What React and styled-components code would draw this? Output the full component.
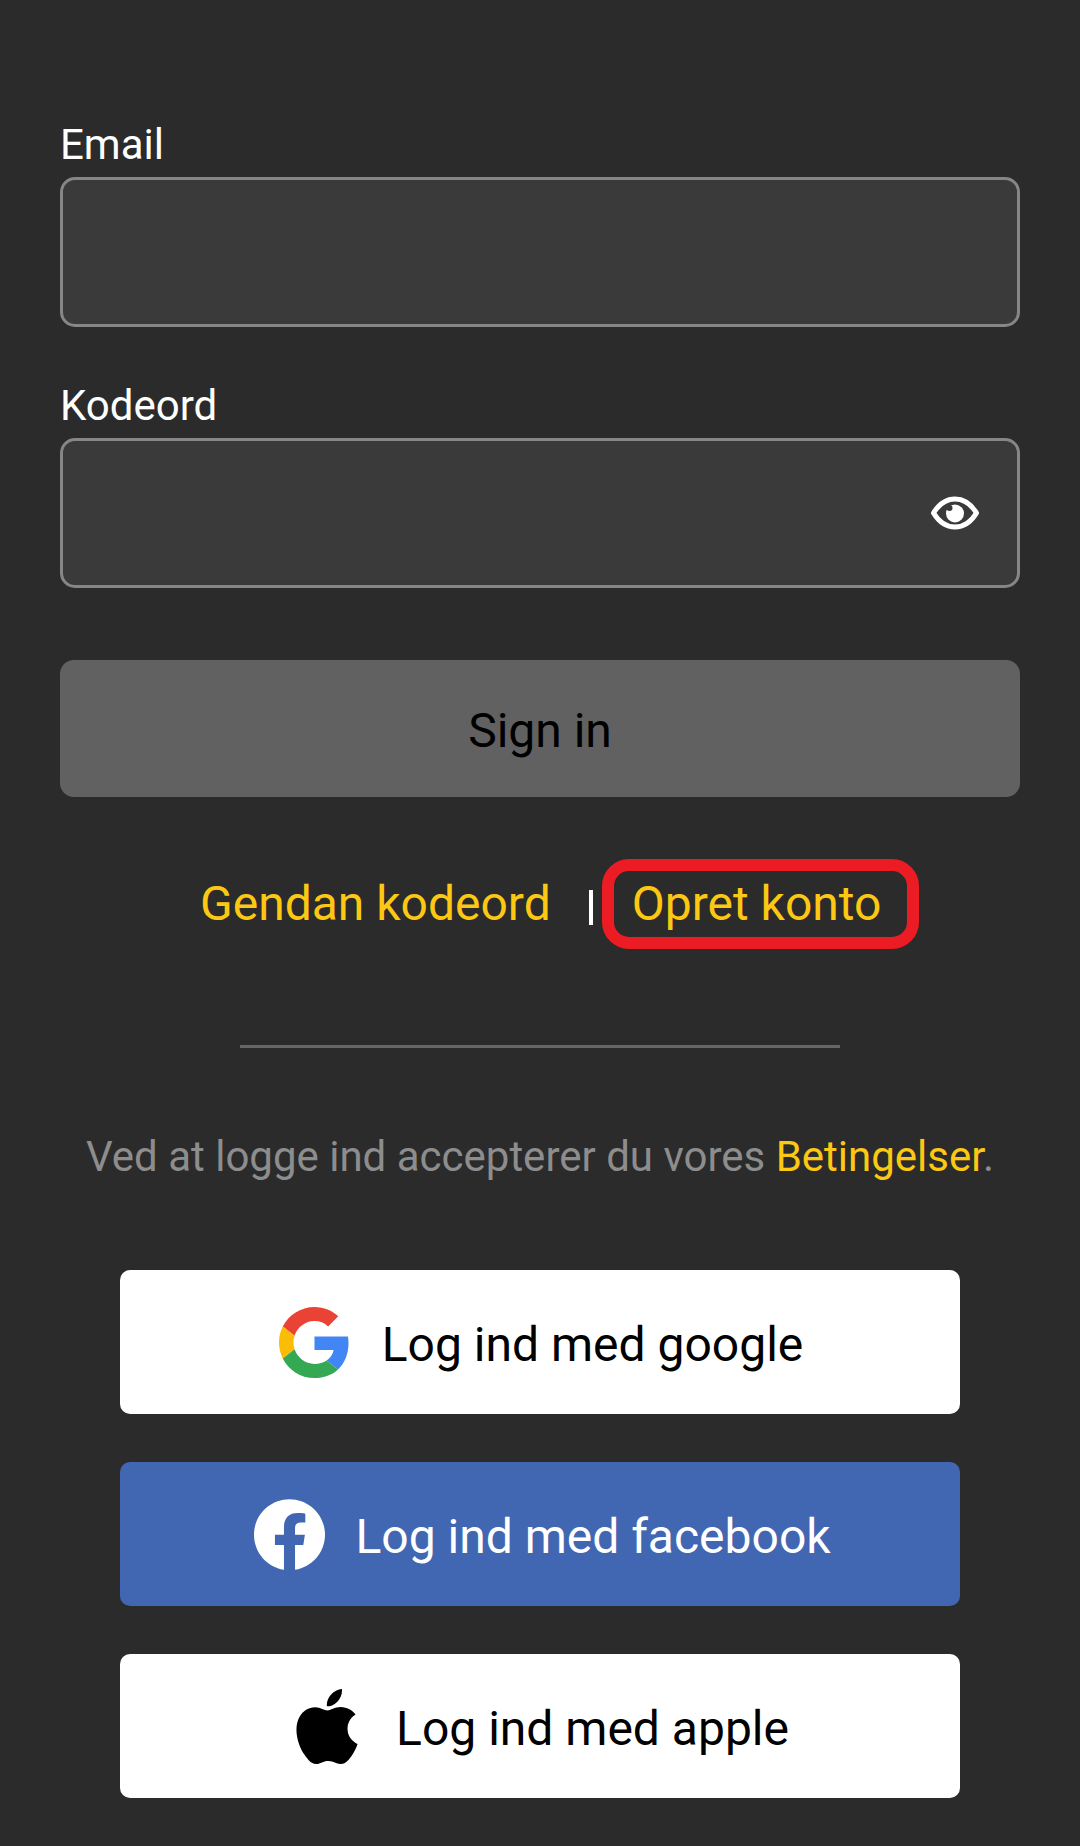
import React from "react";
import styled, { createGlobalStyle } from "styled-components";

const Global = createGlobalStyle`
  html, body { margin: 0; padding: 0; background: #2b2b2b; }
  * { box-sizing: border-box; }
`;

const Page = styled.main`
  width: 1080px;
  height: 1846px;
  padding: 120px 60px 0;
  background: #2b2b2b;
  font-family: Roboto, "Liberation Sans", sans-serif;
  display: flex;
  flex-direction: column;
  overflow: hidden;
`;

const Field = styled.div`
  display: flex;
  flex-direction: column;
  margin-bottom: 54px;
`;

const Label = styled.label`
  height: 57px;
  font-size: 42px;
  line-height: 49px;
  color: #fff;
`;

const InputBox = styled.div`
  width: 960px;
  height: 150px;
  border: 3px solid #868686;
  border-radius: 15px;
  background: #3a3a3a;
  display: flex;
  align-items: center;
  justify-content: flex-end;
  padding: 0 38px 0 0;
`;

const SignIn = styled.button`
  width: 960px;
  height: 137px;
  margin-top: 18px;
  border: 0;
  border-radius: 14px;
  background: #616161;
  color: #000;
  font: 400 48px/56px Roboto, sans-serif;
  padding: 4px 0 0;
`;

const Links = styled.div`
  height: 92px;
  margin-top: 60px;
  display: flex;
  align-items: center;
  font-size: 48px;
  padding-left: 140px;
  color: #fcc813;
`;

const Sep = styled.span`
  width: 4px;
  height: 35px;
  margin: 8px 39px 0 38px;
  background: #fff;
`;

const Highlighted = styled.span`
  position: relative;
  display: inline-block;
  &::after {
    content: "";
    position: absolute;
    left: -30px;
    right: -38px;
    top: -16px;
    bottom: -17px;
    border: 12px solid #ec1c24;
    border-radius: 27px;
  }
`;

const Divider = styled.hr`
  width: 600px;
  height: 3px;
  margin: 96px auto 0;
  border: 0;
  background: #666;
`;

const Terms = styled.p`
  margin: 84px 0 0;
  text-align: center;
  font-size: 42px;
  line-height: 49px;
  color: #8d8d8d;
`;

const TermsLink = styled.span`
  color: #fcc813;
`;

const SocialList = styled.div`
  margin-top: 89px;
  display: flex;
  flex-direction: column;
  align-items: center;
  gap: 48px;
`;

const SocialButton = styled.button`
  width: 840px;
  height: 144px;
  border: 0;
  border-radius: 10px;
  padding: 0 0 0 ${(p) => p.$shift}px;
  display: flex;
  align-items: center;
  justify-content: center;
  gap: ${(p) => p.$gap}px;
  background: ${(p) => p.$bg};
  color: ${(p) => p.$fg};
  font: 400 48px/56px Roboto, sans-serif;
`;

const SocialLabel = styled.span`
  margin-top: 5px;
`;

const Eye = () => (
  <svg width="48" height="34" viewBox="0 0 48 34" fill="none">
    <path d="M2.500 17C8 8 15.500 3 24 3s16 5 21.500 14C40 26 32.500 31 24 31S8 26 2.500 17Z" stroke="#fff" strokeWidth="5" strokeLinejoin="round" />
    <circle cx="24" cy="17.500" r="9" fill="#fff" />
    <circle cx="18.500" cy="12" r="3" fill="#3a3a3a" />
  </svg>
);

const GoogleLogo = () => (
  <svg width="71" height="71" viewBox="0 0 48 48">
    <path fill="#EA4335" d="M24 9.500c3.540 0 6.710 1.220 9.210 3.600l6.850-6.850C35.900 2.380 30.470 0 24 0 14.620 0 6.510 5.380 2.560 13.220l7.980 6.190C12.430 13.720 17.740 9.500 24 9.500z" />
    <path fill="#4285F4" d="M46.980 24.550c0-1.570-.15-3.090-.38-4.550H24v9.020h12.940c-.58 2.960-2.260 5.480-4.780 7.180l7.730 6c4.510-4.180 7.090-10.360 7.090-17.650z" />
    <path fill="#FBBC05" d="M10.530 28.590c-.48-1.450-.76-2.990-.76-4.590s.27-3.140.76-4.590l-7.980-6.190C.92 16.460 0 20.120 0 24c0 3.880.92 7.540 2.560 10.780l7.970-6.190z" />
    <path fill="#34A853" d="M24 48c6.480 0 11.930-2.130 15.890-5.810l-7.730-6c-2.150 1.450-4.920 2.300-8.160 2.300-6.260 0-11.570-4.220-13.470-9.910l-7.980 6.190C6.510 42.620 14.620 48 24 48z" />
  </svg>
);

const FacebookLogo = () => (
  <svg width="71" height="71" viewBox="0 0 24 24">
    <path fill="#fff" d="M24 12.073c0-6.627-5.373-12-12-12s-12 5.373-12 12c0 5.990 4.388 10.954 10.125 11.854v-8.385H7.078v-3.470h3.047V9.430c0-3.007 1.792-4.669 4.533-4.669 1.312 0 2.686.235 2.686.235v2.953H15.830c-1.491 0-1.956.925-1.956 1.874v2.250h3.328l-.532 3.470h-2.796v8.385C19.612 23.027 24 18.062 24 12.073z" />
  </svg>
);

const AppleLogo = () => (
  <svg width="62" height="75" viewBox="2.200 0 19.600 24">
    <path fill="#000" d="M12.152 6.896c-.948 0-2.415-1.078-3.960-1.040-2.040.027-3.910 1.183-4.961 3.014-2.117 3.675-.546 9.103 1.519 12.090 1.013 1.454 2.208 3.090 3.792 3.039 1.520-.065 2.090-.987 3.935-.987 1.831 0 2.350.987 3.960.948 1.637-.026 2.676-1.480 3.676-2.948 1.156-1.688 1.636-3.325 1.662-3.415-.039-.013-3.182-1.221-3.220-4.857-.026-3.040 2.480-4.494 2.597-4.559-1.429-2.090-3.623-2.324-4.390-2.376-2-.156-3.675 1.090-4.610 1.090zM15.530 3.830c.843-1.012 1.400-2.427 1.245-3.830-1.207.052-2.662.805-3.532 1.818-.780.896-1.454 2.338-1.273 3.714 1.338.104 2.715-.688 3.559-1.701" />
  </svg>
);

export default function App() {
  return (
    <>
      <Global />
      <Page>
        <Field>
          <Label>Email</Label>
          <InputBox />
        </Field>
        <Field>
          <Label>Kodeord</Label>
          <InputBox>
            <Eye />
          </InputBox>
        </Field>
        <SignIn>Sign in</SignIn>
        <Links>
          <span>Gendan kodeord</span>
          <Sep />
          <Highlighted>Opret konto</Highlighted>
        </Links>
        <Divider />
        <Terms>
          Ved at logge ind accepterer du vores <TermsLink>Betingelser</TermsLink>.
        </Terms>
        <SocialList>
          <SocialButton $bg="#fff" $fg="#000" $gap={32} $shift={2}>
            <GoogleLogo />
            <SocialLabel>Log ind med google</SocialLabel>
          </SocialButton>
          <SocialButton $bg="#4267b2" $fg="#fff" $gap={30} $shift={5}>
            <FacebookLogo />
            <SocialLabel>Log ind med facebook</SocialLabel>
          </SocialButton>
          <SocialButton $bg="#fff" $fg="#000" $gap={38} $shift={5}>
            <AppleLogo />
            <SocialLabel>Log ind med apple</SocialLabel>
          </SocialButton>
        </SocialList>
      </Page>
    </>
  );
}
